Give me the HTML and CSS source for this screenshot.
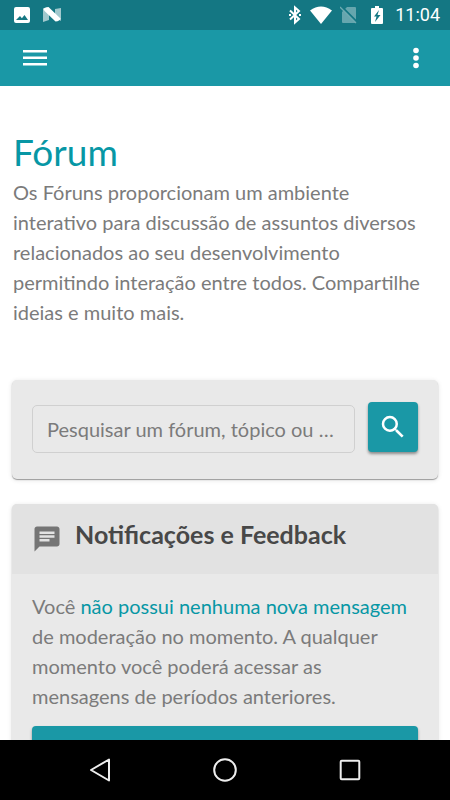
FILE: index.html
```html
<!DOCTYPE html>
<html lang="pt-BR">
<head>
<meta charset="utf-8">
<meta name="viewport" content="width=device-width, initial-scale=1">
<title>Fórum</title>
<link rel="stylesheet" href="styles.css">
</head>
<body>
<div class="status-bar">
  <svg width="18" height="18" viewBox="0 0 18 18" aria-hidden="true"><path fill="#fff" fill-rule="evenodd" d="M3 1h12a2 2 0 0 1 2 2v12a2 2 0 0 1-2 2H3a2 2 0 0 1-2-2V3a2 2 0 0 1 2-2zM3 14h12l-3.500-5-2.600 3.300L7 10z"/></svg>
  <svg class="android-n" width="20" height="18" viewBox="0 0 20 18" aria-hidden="true"><path fill="#fff" opacity=".6" d="M1 2l6 5v7l-6 2zM13 3l6-1v13l-6-4z"/><path fill="#fff" d="M1.500 3Q2 1.500 6.500 1L18.500 12.500Q18 15 13.500 15.500L2.500 5z"/></svg>
  <span class="spacer"></span>
  <svg class="bluetooth" width="12" height="20" viewBox="0 0 12 20" aria-hidden="true"><path fill="none" stroke="#fff" stroke-width="2" d="M1 5.500l9 8.500-4 3.500v-15L10 6l-9 8.500"/><path fill="#fff" d="M0 9h2v2H0zM10 9h2v2h-2z"/></svg>
  <svg class="wifi" width="22" height="18" viewBox="0 0 22 18" aria-hidden="true"><path fill="#fff" d="M0 4.500Q11-3.500 22 4.500L11 18z"/></svg>
  <svg class="sim" width="18" height="18" viewBox="0 0 18 18" aria-hidden="true"><path fill="#fff" opacity=".35" d="M7 1h8a1 1 0 0 1 1 1v14a1 1 0 0 1-1 1H3a1 1 0 0 1-1-1V6z"/><path stroke="#147783" stroke-width="2" d="M1 0l16 16"/><path stroke="#6fabb2" stroke-width="1.300" d="M0 1l16 16"/></svg>
  <svg class="battery" width="12" height="18" viewBox="0 0 12 18" aria-hidden="true"><path fill="#fff" d="M4 0h4v2h3a1 1 0 0 1 1 1v14a1 1 0 0 1-1 1H1a1 1 0 0 1-1-1V3a1 1 0 0 1 1-1h3z"/><path fill="#147783" d="M8 4L3 10.500h2.500L4 16l5.500-7H6.500z"/></svg>
  <span>11:04</span>
</div>
<header class="app-bar">
  <button class="icon-button" type="button" aria-label="Menu">
    <svg width="24" height="18" viewBox="0 0 24 18"><path fill="#fff" d="M0 1h24v2.500H0zM0 7.500h24V10H0zM0 14h24v2.500H0z"/></svg>
  </button>
  <button class="icon-button" type="button" aria-label="Mais opções">
    <svg width="8" height="22" viewBox="0 0 8 22"><g fill="#fff"><circle cx="4" cy="3.500" r="2.800"/><circle cx="4" cy="11" r="2.800"/><circle cx="4" cy="18.500" r="2.800"/></g></svg>
  </button>
</header>
<main class="page">
  <div class="page-head">
    <h1 class="title">Fórum</h1>
    <p class="intro">Os Fóruns proporcionam um ambiente interativo para discussão de assuntos diversos relacionados ao seu desenvolvimento permitindo interação entre todos. Compartilhe ideias e muito mais.</p>
  </div>
  <form class="card search">
    <input class="search-input" type="text" aria-label="Pesquisar" placeholder="Pesquisar um fórum, tópico ou comentário">
    <button class="search-button" type="button" aria-label="Pesquisar">
      <svg width="30" height="30" viewBox="0 0 24 24"><path fill="#fff" d="M15.500 14h-.79l-.28-.27A6.470 6.470 0 0 0 16 9.500 6.500 6.500 0 1 0 9.500 16c1.610 0 3.090-.59 4.230-1.570l.27.28v.79l5 4.990L20.490 19zm-6 0a4.500 4.500 0 1 1 0-9 4.500 4.500 0 0 1 0 9z"/></svg>
    </button>
  </form>
  <section class="card">
    <div class="card-header">
      <svg width="30" height="30" viewBox="0 0 24 24" aria-hidden="true"><path fill="#757575" d="M20 2H4c-1.100 0-1.990.9-1.990 2L2 22l4-4h14c1.100 0 2-.9 2-2V4c0-1.100-.9-2-2-2zm-6 12H6v-2h8zm4-3H6V9h12zm0-3H6V6h12z"/></svg>
      <h2 class="card-title">Notificações e Feedback</h2>
    </div>
    <div class="card-body">
      <p class="card-text">Você <a class="link" href="#mensagens">não possui nenhuma nova mensagem</a> de moderação no momento. A qualquer momento você poderá acessar as mensagens de períodos anteriores.</p>
      <button class="wide-button" type="button" aria-label="Acessar mensagens"></button>
    </div>
  </section>
</main>
<nav class="system-nav">
  <button class="nav-button" type="button" aria-label="Voltar"><svg width="24" height="26" viewBox="0 0 24 26"><path fill="none" stroke="#eee" stroke-width="2" stroke-linejoin="round" d="M21 2.500v21L3 13z"/></svg></button>
  <button class="nav-button" type="button" aria-label="Início"><svg width="26" height="26" viewBox="0 0 26 26"><circle cx="13" cy="13" r="10.800" fill="none" stroke="#eee" stroke-width="2"/></svg></button>
  <button class="nav-button" type="button" aria-label="Recentes"><svg width="24" height="24" viewBox="0 0 24 24"><rect x="2.700" y="2.700" width="18.600" height="18.600" rx="1" fill="none" stroke="#eee" stroke-width="2"/></svg></button>
</nav>
</body>
</html>
```

FILE: styles.css
```css
* {
  box-sizing: border-box;
}

body {
  display: flex;
  flex-direction: column;
  height: 100vh;
  margin: 0;
  background: #fff;
  color: #7b7b7b;
  font-family: Lato, sans-serif;
  font-size: 20px;
  line-height: 30px;
}

h1, h2, p {
  margin: 0;
}

button {
  padding: 0;
  border: 0;
  background: none;
}

svg {
  display: block;
  flex: none;
}

.status-bar {
  display: flex;
  flex: none;
  align-items: center;
  height: 30px;
  padding: 0 10px 0 13px;
  background: #147783;
  color: #fff;
  font-family: Roboto, sans-serif;
  font-size: 18px;
  font-weight: 400;
}

.android-n {
  margin-left: 11px;
}

.spacer {
  flex: 1;
}

.wifi {
  margin-left: 9px;
}

.sim {
  margin-left: 8px;
}

.battery {
  margin: 0 12px 0 13px;
}

.app-bar {
  display: flex;
  flex: none;
  align-items: center;
  justify-content: space-between;
  height: 56px;
  padding: 0 14px 0 15px;
  background: #1a98a6;
}

.icon-button {
  display: grid;
  place-items: center;
  width: 40px;
  height: 40px;
}

.page {
  flex: 1;
  min-height: 0;
  overflow: hidden;
  padding: 41px 12px 0;
}

.page-head {
  margin-bottom: 53px;
  padding: 0 12px 0 1px;
}

.title {
  color: #0797a5;
  font-size: 37px;
  font-weight: 400;
  line-height: 50px;
}

.card {
  margin-bottom: 25px;
  border-radius: 5px;
  background: #e9e9e9;
  box-shadow: 0 1px 1px rgba(0, 0, 0, 0.35), 0 1px 5px rgba(0, 0, 0, 0.12);
}

.search {
  display: flex;
  align-items: flex-start;
  gap: 13px;
  padding: 22px 20px 26px;
}

.search-input {
  flex: 1;
  min-width: 0;
  height: 48px;
  margin-top: 3px;
  padding: 0 14px;
  border: 1px solid #d0d0d0;
  border-radius: 5px;
  background: transparent;
  color: #7b7b7b;
  font: inherit;
  text-overflow: ellipsis;
}

.search-input::placeholder {
  color: #7b7b7b;
  opacity: 1;
}

.search-button {
  display: grid;
  flex: none;
  place-items: center;
  width: 50px;
  height: 50px;
  border-radius: 4px;
  background: #1a98a6;
  box-shadow: 0 2px 3px rgba(0, 0, 0, 0.4);
}

.card-header {
  display: flex;
  align-items: center;
  gap: 13px;
  height: 70px;
  padding: 0 20px;
  border-radius: 5px 5px 0 0;
  background: #e2e2e2;
}

.card-title {
  padding-bottom: 10px;
  color: #484848;
  font-size: 25px;
  font-weight: 700;
  line-height: 30px;
}

.card-body {
  padding: 17px 20px 20px;
}

.card-text {
  margin-bottom: 15px;
}

.link {
  color: #0797a5;
  text-decoration: none;
}

.wide-button {
  display: block;
  width: 100%;
  height: 50px;
  border-radius: 4px;
  background: #1a98a6;
  box-shadow: 0 2px 3px rgba(0, 0, 0, 0.4);
}

.system-nav {
  display: flex;
  flex: none;
  align-items: center;
  justify-content: center;
  gap: 85px;
  height: 60px;
  background: #000;
}

.nav-button {
  display: grid;
  place-items: center;
  width: 40px;
  height: 40px;
}
```
